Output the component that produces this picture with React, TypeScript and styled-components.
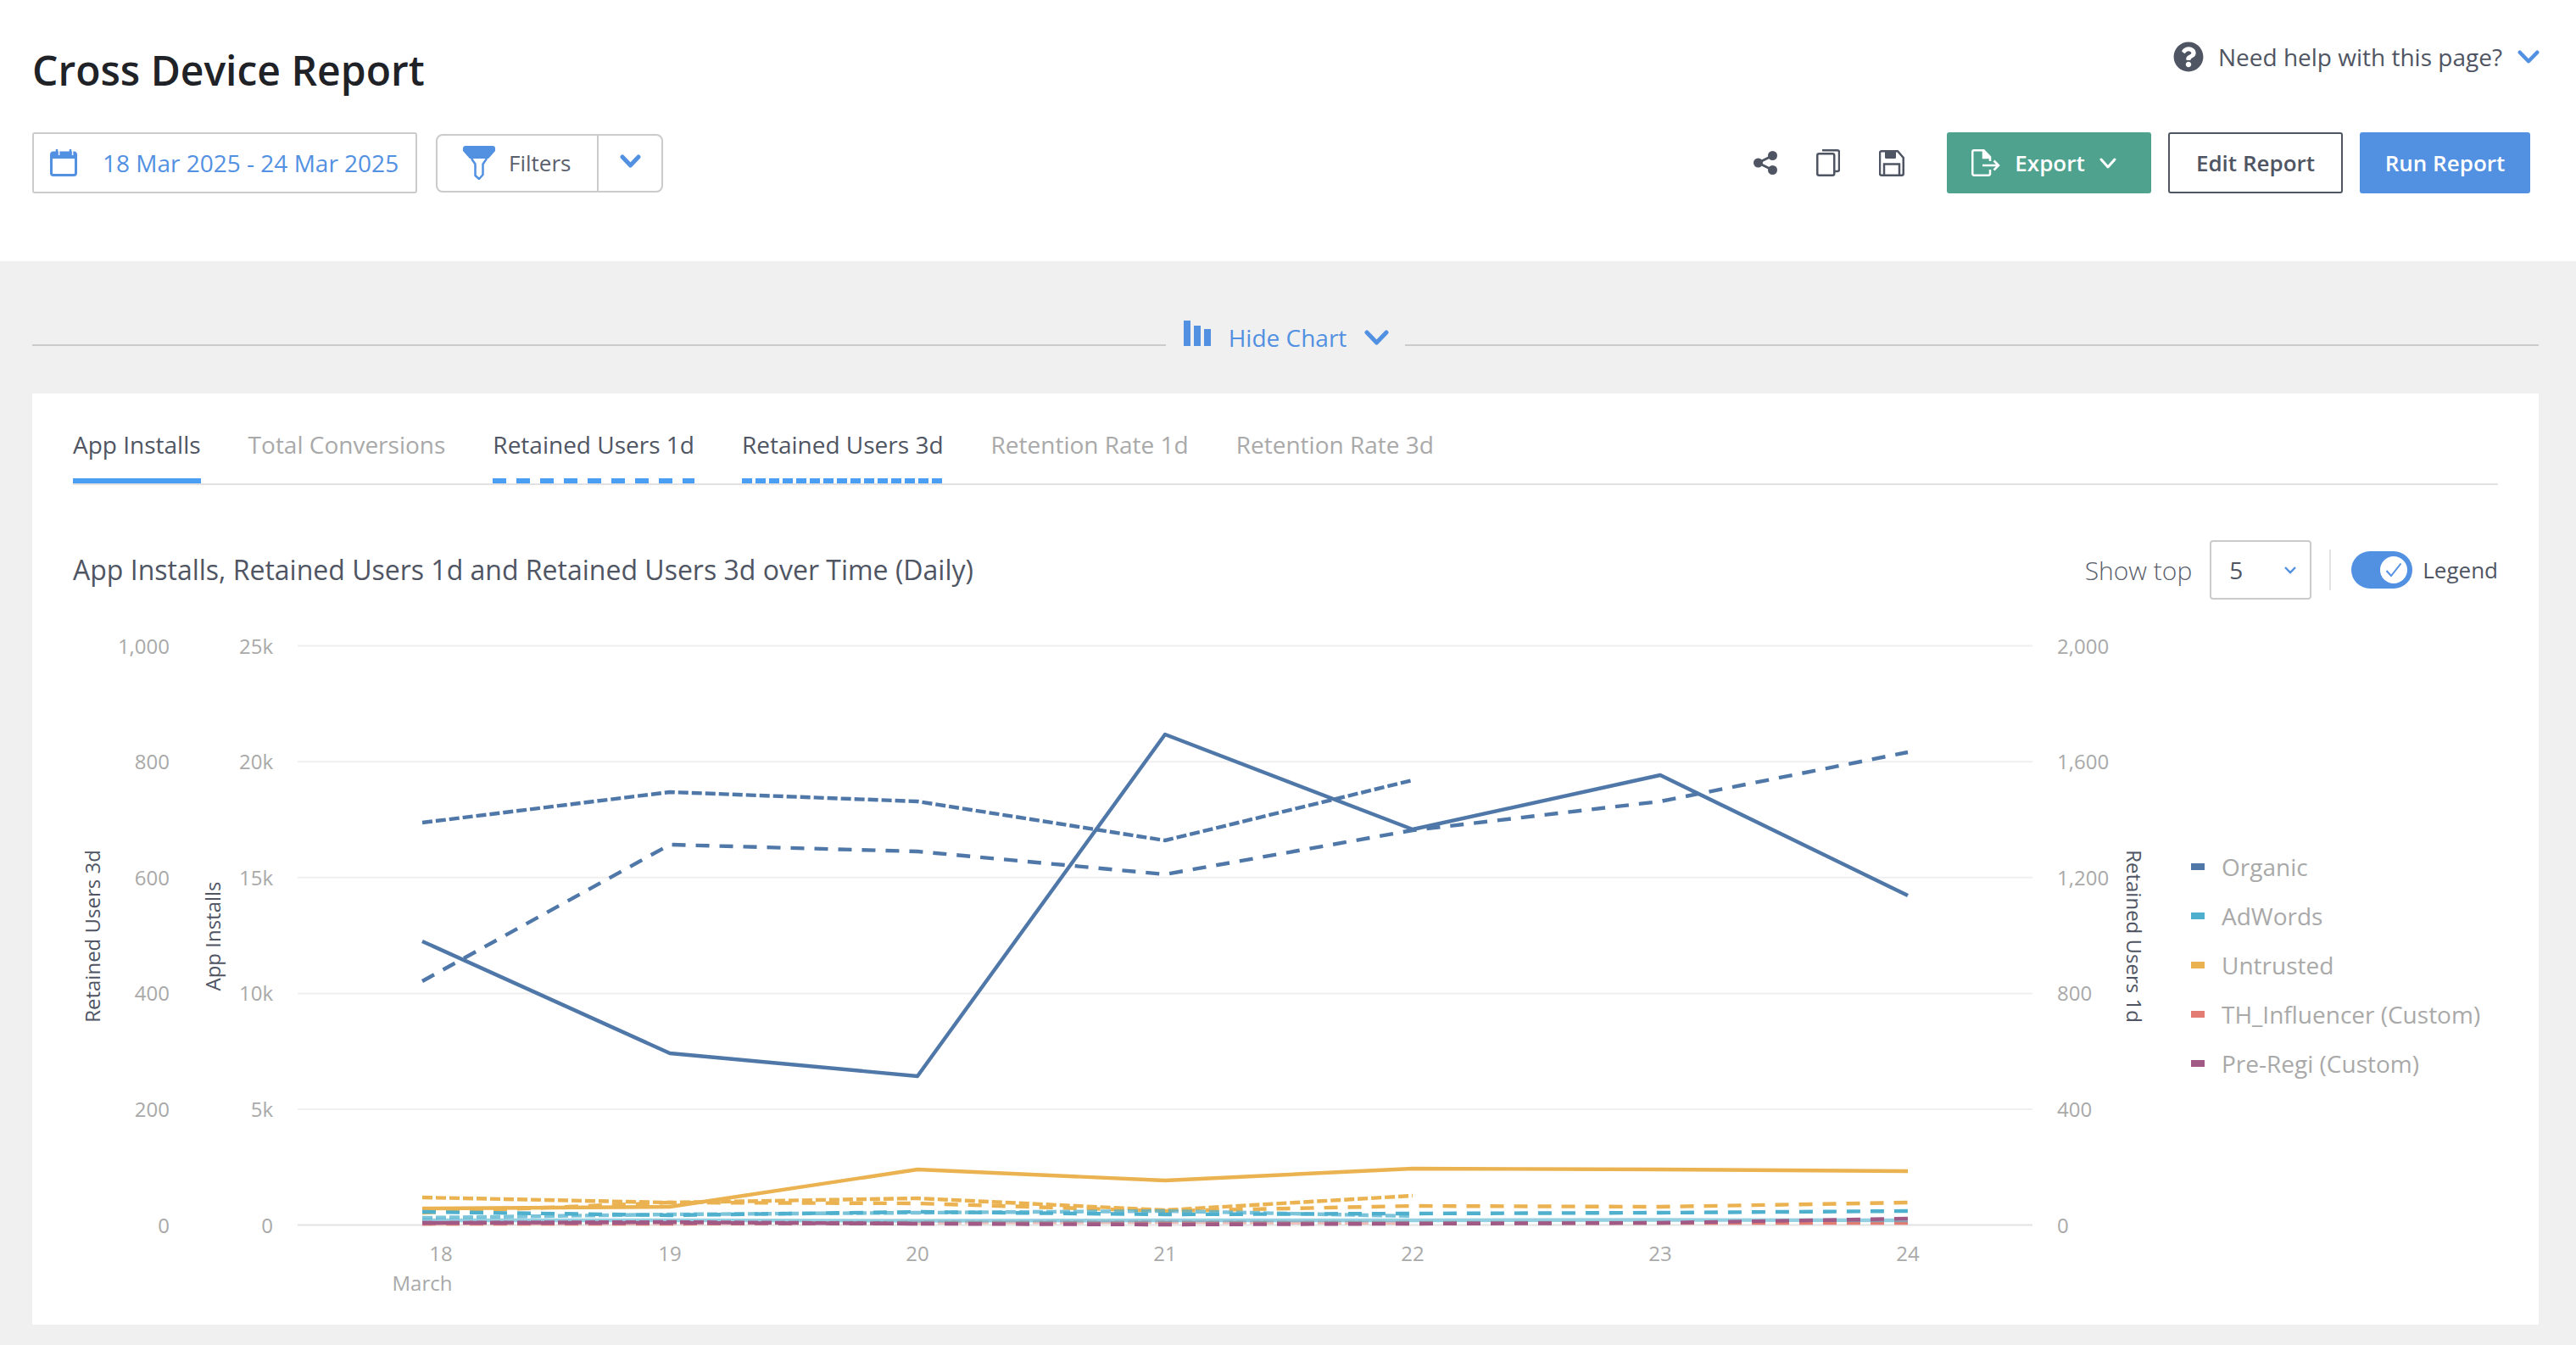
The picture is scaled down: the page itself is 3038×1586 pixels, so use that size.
import React from 'react'
import styled, { createGlobalStyle } from 'styled-components'
import { FaQuestionCircle } from 'react-icons/fa'

const GlobalStyle = createGlobalStyle`
  html, body {
    margin: 0;
    padding: 0;
    background: #f0f0f0;
    font-family: "Open Sans", "Liberation Sans", sans-serif;
    color: #4f5563;
  }
`

const Page = styled.div`
  width: 3038px;
  height: 1586px;
  overflow: hidden;
  background: #f0f0f0;
`

const Header = styled.header`
  height: 308px;
  box-sizing: border-box;
  background: #fff;
  padding: 0 54px 0 38px;
  display: flex;
  flex-direction: column;
`

const HeaderTop = styled.div`
  height: 156px;
  display: flex;
  justify-content: space-between;
  align-items: flex-start;
`

const Title = styled.h1`
  margin: 54px 0 0;
  font-size: 48px;
  line-height: 58px;
  font-weight: 600;
  color: #1f2327;
`

const Help = styled.div`
  margin-top: 48px;
  display: flex;
  align-items: center;
  font-size: 28px;
  line-height: 38px;
  color: #4f5563;
  margin-right: -28px;

  svg:first-child {
    margin-right: 17px;
  }
`

const HelpChevron = styled.span`
  display: flex;
  margin-left: 18px;
`

const Toolbar = styled.div`
  display: flex;
  align-items: center;
  height: 72px;
`

const DateBox = styled.div`
  width: 454px;
  height: 72px;
  box-sizing: border-box;
  border: 2px solid #cbcbcb;
  border-radius: 3px;
  display: flex;
  align-items: center;
  padding-left: 19px;
  gap: 30px;
  font-size: 28px;
  color: #5290e2;
`

const FilterGroup = styled.div`
  margin-left: 22px;
  width: 268px;
  height: 69px;
  box-sizing: border-box;
  border: 2px solid #cbcbcb;
  border-radius: 8px;
  display: flex;
  align-items: stretch;
`

const FilterLabel = styled.div`
  width: 190px;
  box-sizing: border-box;
  display: flex;
  align-items: center;
  padding-left: 30px;
  gap: 16px;
  font-size: 26px;
  color: #5a606c;
  border-right: 2px solid #cbcbcb;
`

const FilterCaret = styled.div`
  flex: 1;
  display: flex;
  align-items: center;
  justify-content: center;
  padding-bottom: 5px;
`

const ToolbarRight = styled.div`
  margin-left: auto;
  display: flex;
  align-items: center;
`

const IconRow = styled.div`
  display: flex;
  align-items: center;
  gap: 46px;
  margin-right: 50px;
  color: #4f5563;
`

const Button = styled.button<{ $variant: 'green' | 'outline' | 'blue'; $width: number }>`
  width: ${(p) => p.$width}px;
  height: 72px;
  box-sizing: border-box;
  margin-left: ${(p) => (p.$variant === 'green' ? 0 : 20)}px;
  border-radius: 3px;
  border: ${(p) => (p.$variant === 'outline' ? '2px solid #4f5563' : 'none')};
  background: ${(p) =>
    p.$variant === 'green' ? '#4fa28e' : p.$variant === 'blue' ? '#5290e2' : '#fff'};
  color: ${(p) => (p.$variant === 'outline' ? '#4f5563' : '#fff')};
  font-family: inherit;
  font-size: 26px;
  font-weight: 600;
  padding: 0 ${(p) => (p.$variant === 'green' ? 12 : 0)}px 0 0;
  display: flex;
  align-items: center;
  justify-content: center;
  gap: 17px;
`

const ChartToggle = styled.div`
  height: 156px;
  box-sizing: border-box;
  display: flex;
  align-items: flex-start;
  padding: 0 44px 0 38px;
`

const ToggleRule = styled.div`
  flex: 1;
  height: 2px;
  background: #cbcbcb;
  margin-top: 98px;
`

const ToggleLabel = styled.div`
  display: flex;
  align-items: center;
  height: 40px;
  margin-top: 70px;
  padding: 0 19px 0 21px;
  font-size: 28px;
  color: #5290e2;
  gap: 21px;
`

const BarsWrap = styled.span`
  display: flex;
  margin-top: -10px;
`

const Card = styled.section`
  margin: 0 44px 0 38px;
  height: 1098px;
  background: #fff;
`

const Tabs = styled.div`
  margin: 0 48px;
  height: 108px;
  box-sizing: border-box;
  border-bottom: 2px solid #e2e2e2;
  display: flex;
  gap: 56px;
`

const lineStyles = {
  solid: 'linear-gradient(#4a9ff5, #4a9ff5)',
  long: 'repeating-linear-gradient(90deg, #4a9ff5 0 16px, transparent 16px 28px)',
  short: 'repeating-linear-gradient(90deg, #4a9ff5 0 12px, transparent 12px 16px)',
}

const Tab = styled.div<{ $active: boolean; $line?: keyof typeof lineStyles }>`
  height: 106px;
  box-sizing: border-box;
  padding-top: 40px;
  font-size: 28px;
  line-height: 40px;
  white-space: nowrap;
  color: ${(p) => (p.$active ? '#4f5563' : '#a9a9a9')};
  background-image: ${(p) => (p.$line ? lineStyles[p.$line] : 'none')};
  background-repeat: no-repeat;
  background-size: 100% 6px;
  background-position: left bottom;
`

const ChartHeader = styled.div`
  margin: 65px 48px 0 48px;
  height: 70px;
  display: flex;
  align-items: center;
`

const ChartTitle = styled.h2`
  margin: 0;
  flex: 1;
  font-size: 32px;
  line-height: 40px;
  font-weight: 400;
  color: #4f5563;
`

const ShowTop = styled.span`
  font-size: 30px;
  font-weight: 300;
  color: #5a606c;
  margin-right: 21px;
`

const Select = styled.div`
  width: 120px;
  height: 70px;
  box-sizing: border-box;
  border: 2px solid #cbcbcb;
  border-radius: 4px;
  display: flex;
  align-items: center;
  justify-content: space-between;
  padding: 0 16px 0 21px;
  font-size: 28px;
  color: #4f5563;
`

const Separator = styled.div`
  width: 2px;
  height: 48px;
  background: #e2e2e2;
  margin: 0 24px 0 21px;
`

const Switch = styled.div`
  position: relative;
  width: 72px;
  height: 44px;
  border-radius: 22px;
  background: #5290e2;
`

const SwitchKnob = styled.div`
  position: absolute;
  top: 6px;
  right: 6px;
  width: 32px;
  height: 32px;
  border-radius: 50%;
  background: #fff;
  display: flex;
  align-items: center;
  justify-content: center;
`

const LegendLabel = styled.span`
  margin-left: 12px;
  font-size: 26px;
  color: #4f5563;
`

const ChartRow = styled.div`
  margin: 23px 0 0 48px;
  display: flex;
  align-items: flex-start;
`

const ChartSvg = styled.svg`
  display: block;
  flex: none;
  font-family: "Open Sans", "Liberation Sans", sans-serif;
`

const Legend = styled.ul`
  list-style: none;
  margin: 263px 0 0 18px;
  padding: 0;
`

const LegendItem = styled.li`
  height: 58px;
  display: flex;
  align-items: center;
  gap: 20px;
  font-size: 28px;
  color: #a9a9a9;
  white-space: nowrap;
`

const Swatch = styled.span<{ $color: string }>`
  width: 16px;
  height: 8px;
  background: ${(p) => p.$color};
`

const Chevron = ({ w, h, sw, color = '#5290e2' }: { w: number; h: number; sw: number; color?: string }) => (
  <svg width={w} height={h} viewBox={`0 0 ${w} ${h}`} fill="none">
    <path
      d={`M${sw / 2 + 0.5} ${sw / 2 + 0.5}L${w / 2} ${h - sw / 2 - 0.5}L${w - sw / 2 - 0.5} ${sw / 2 + 0.5}`}
      stroke={color}
      strokeWidth={sw}
      strokeLinecap="round"
      strokeLinejoin="round"
    />
  </svg>
)

const CalendarIcon = () => (
  <svg width="32" height="32" viewBox="0 0 32 32" fill="none">
    <rect x="1.5" y="4" width="29" height="26.5" rx="2.5" stroke="#5290e2" strokeWidth="3" />
    <path d="M1.5 5h29v6h-29z" fill="#5290e2" />
    <path d="M8 0v8M24 0v8" stroke="#5290e2" strokeWidth="2.5" />
    <path d="M10.6 2v5M26.6 2v5" stroke="#fff" strokeWidth="1.5" />
  </svg>
)

const FunnelIcon = () => (
  <svg width="38" height="40" viewBox="0 0 38 40" fill="none">
    <path d="M3 0h32a3 3 0 0 1 3 3v3L30 15H8L0 6V3a3 3 0 0 1 3-3z" fill="#5290e2" />
    <path
      d="M10 15l4.5 6.5V35l4.5 4 4.5-5V21.500L28 15"
      stroke="#5290e2"
      strokeWidth="2.500"
      strokeLinejoin="round"
    />
  </svg>
)

const ShareIcon = () => (
  <svg width="28" height="28" viewBox="0 0 28 28" fill="#4f5563">
    <circle cx="5.500" cy="14" r="5.500" />
    <circle cx="22.500" cy="5.500" r="5.500" />
    <circle cx="22.500" cy="22.500" r="5.500" />
    <path d="M5.500 14L22.500 5.500M5.500 14l17 8.500" stroke="#4f5563" strokeWidth="3" />
  </svg>
)

const CopyIcon = () => (
  <svg width="28" height="32" viewBox="0 0 28 32" fill="none" stroke="#4f5563" strokeWidth="2.500">
    <rect x="1.250" y="5.250" width="20" height="25.500" rx="2" />
    <path d="M7 1.250h18a2 2 0 0 1 2 2V24a2 2 0 0 1-2 2h-3" />
  </svg>
)

const SaveIcon = () => (
  <svg width="30" height="31" viewBox="0 0 30 31" fill="none">
    <path
      d="M3 1.250h19L28.750 9v18.750a2 2 0 0 1-2 2H3a2 2 0 0 1-2-2v-24.500a2 2 0 0 1 2-2z"
      stroke="#4f5563"
      strokeWidth="2.500"
    />
    <path d="M7 1h13v7.500a1.500 1.500 0 0 1-1.500 1.500h-10A1.500 1.500 0 0 1 7 8.500z" fill="#4f5563" />
    <path d="M6 30V16.500h18V30" stroke="#4f5563" strokeWidth="2.500" />
  </svg>
)

const ExportIcon = () => (
  <svg width="34" height="32" viewBox="0 0 34 32" fill="none" stroke="#fff" strokeWidth="2.500">
    <path d="M22 24v5a1.750 1.750 0 0 1-1.750 1.750H3A1.750 1.750 0 0 1 1.250 29V3A1.750 1.750 0 0 1 3 1.250h11.500L22 9v5" />
    <path d="M14 1.500V10h8" fill="#fff" />
    <path d="M13 19h19M26.500 13.500L32 19l-5.500 5.500" />
  </svg>
)

const BarsIcon = () => (
  <svg width="32" height="30" viewBox="0 0 32 30" fill="#5290e2">
    <rect x="0" y="0" width="8" height="30" />
    <rect x="12" y="6" width="8" height="24" />
    <rect x="24" y="10" width="8" height="20" />
  </svg>
)

const X = [498, 790, 1082, 1374, 1666, 1958, 2250]
const BASE = 1444.6
const COLORS = {
  organic: '#4f78a8',
  adwords: '#4fb0ce',
  untrusted: '#eab250',
  influencer: '#e37c73',
  prereg: '#a05a85',
}

type Series = { color: string; ys: number[]; dash?: 'long' | 'short'; opacity?: number }

const series: Series[] = [
  { color: COLORS.influencer, ys: [1443, 1443, 1442, 1442, 1442, 1442, 1442], dash: 'long' },
  { color: COLORS.influencer, ys: [1443, 1442.500, 1441.500, 1441, 1442], dash: 'short', opacity: 0.5 },
  { color: COLORS.adwords, ys: [1439, 1439, 1439.500, 1439, 1439, 1438.500, 1439], opacity: 0.6 },
  { color: COLORS.untrusted, ys: [1425, 1423, 1379, 1392, 1378, 1379, 1381] },
  { color: COLORS.untrusted, ys: [1430, 1418, 1419, 1428, 1422, 1423, 1418], dash: 'long' },
  { color: COLORS.untrusted, ys: [1412, 1418, 1413, 1427, 1410], dash: 'short' },
  { color: COLORS.adwords, ys: [1429, 1433, 1429, 1432, 1431, 1430, 1428], dash: 'long' },
  { color: COLORS.adwords, ys: [1436, 1432, 1430, 1428, 1434], dash: 'short', opacity: 0.75 },
  { color: COLORS.prereg, ys: [1442, 1441, 1443], dash: 'short' },
  { color: COLORS.prereg, ys: [1442, 1442, 1443, 1444, 1443, 1442, 1437], dash: 'long' },
  { color: COLORS.organic, ys: [1110, 1242, 1269, 866, 978, 914, 1056] },
  { color: COLORS.organic, ys: [1157, 996, 1004, 1031, 979, 945, 887], dash: 'long' },
  { color: COLORS.organic, ys: [970, 934, 945, 991, 920], dash: 'short' },
]

const dashes = { long: '16 12', short: '12 4' }

const ticks = [
  { l: '0', m: '0', r: '0' },
  { l: '200', m: '5k', r: '400' },
  { l: '400', m: '10k', r: '800' },
  { l: '600', m: '15k', r: '1,200' },
  { l: '800', m: '20k', r: '1,600' },
  { l: '1,000', m: '25k', r: '2,000' },
]

const legend = [
  { name: 'Organic', color: COLORS.organic },
  { name: 'AdWords', color: COLORS.adwords },
  { name: 'Untrusted', color: COLORS.untrusted },
  { name: 'TH_Influencer (Custom)', color: COLORS.influencer },
  { name: 'Pre-Regi (Custom)', color: COLORS.prereg },
]

const tabs: { name: string; active: boolean; line?: keyof typeof lineStyles }[] = [
  { name: 'App Installs', active: true, line: 'solid' },
  { name: 'Total Conversions', active: false },
  { name: 'Retained Users 1d', active: true, line: 'long' },
  { name: 'Retained Users 3d', active: true, line: 'short' },
  { name: 'Retention Rate 1d', active: false },
  { name: 'Retention Rate 3d', active: false },
]

const Chart = () => (
  <ChartSvg width="2480" height="820" viewBox="86 730 2480 820">
    {ticks.map((t, i) => {
      const y = BASE - i * 136.6
      return (
        <g key={t.m}>
          <line x1="351" x2="2397" y1={y} y2={y} stroke={i === 0 ? '#e2e2e2' : '#efefef'} strokeWidth="2" />
          <text x="200" y={y + 9} textAnchor="end" fontSize="24" fill="#a9a9a9">{t.l}</text>
          <text x="322" y={y + 9} textAnchor="end" fontSize="24" fill="#a9a9a9">{t.m}</text>
          <text x="2426" y={y + 9} fontSize="24" fill="#a9a9a9">{t.r}</text>
        </g>
      )
    })}
    <text transform="translate(118 1104) rotate(-90)" textAnchor="middle" fontSize="24" fill="#4f5563">Retained Users 3d</text>
    <text transform="translate(260 1104) rotate(-90)" textAnchor="middle" fontSize="24" fill="#4f5563">App Installs</text>
    <text transform="translate(2508 1104) rotate(90)" textAnchor="middle" fontSize="24" fill="#4f5563">Retained Users 1d</text>
    {series.map((s, i) => (
      <polyline
        key={i}
        points={s.ys.map((y, j) => `${X[j]},${y}`).join(' ')}
        fill="none"
        stroke={s.color}
        strokeWidth="4.400"
        strokeLinejoin="round"
        strokeDasharray={s.dash ? dashes[s.dash] : undefined}
        opacity={s.opacity}
      />
    ))}
    {['18', '19', '20', '21', '22', '23', '24'].map((d, i) => (
      <text key={d} x={i === 0 ? 520 : X[i]} y="1487" textAnchor="middle" fontSize="24" fill="#a9a9a9">{d}</text>
    ))}
    <text x="498" y="1522" textAnchor="middle" fontSize="24" fill="#a9a9a9">March</text>
  </ChartSvg>
)

export default function App() {
  return (
    <Page>
      <GlobalStyle />
      <Header>
        <HeaderTop>
          <Title>Cross Device Report</Title>
          <Help>
            <FaQuestionCircle size={36} color="#4f5563" />
            Need help with this page?
            <HelpChevron>
              <Chevron w={26} h={16} sw={4.500} />
            </HelpChevron>
          </Help>
        </HeaderTop>
        <Toolbar>
          <DateBox>
            <CalendarIcon />
            18 Mar 2025 - 24 Mar 2025
          </DateBox>
          <FilterGroup>
            <FilterLabel>
              <FunnelIcon />
              Filters
            </FilterLabel>
            <FilterCaret>
              <Chevron w={25} h={16} sw={5} />
            </FilterCaret>
          </FilterGroup>
          <ToolbarRight>
            <IconRow>
              <ShareIcon />
              <CopyIcon />
              <SaveIcon />
            </IconRow>
            <Button $variant="green" $width={241}>
              <ExportIcon />
              Export
              <Chevron w={20} h={13} sw={3} color="#fff" />
            </Button>
            <Button $variant="outline" $width={206}>Edit Report</Button>
            <Button $variant="blue" $width={201}>Run Report</Button>
          </ToolbarRight>
        </Toolbar>
      </Header>
      <ChartToggle>
        <ToggleRule />
        <ToggleLabel>
          <BarsWrap>
            <BarsIcon />
          </BarsWrap>
          Hide Chart
          <Chevron w={29} h={18} sw={5} />
        </ToggleLabel>
        <ToggleRule />
      </ChartToggle>
      <Card>
        <Tabs>
          {tabs.map((t) => (
            <Tab key={t.name} $active={t.active} $line={t.line}>{t.name}</Tab>
          ))}
        </Tabs>
        <ChartHeader>
          <ChartTitle>App Installs, Retained Users 1d and Retained Users 3d over Time (Daily)</ChartTitle>
          <ShowTop>Show top</ShowTop>
          <Select>
            5
            <Chevron w={14} h={9} sw={2.500} />
          </Select>
          <Separator />
          <Switch>
            <SwitchKnob>
              <svg width="20" height="18" viewBox="0 0 20 18" fill="none">
                <path d="M1.500 10l5.500 6L18.500 1.500" stroke="#5290e2" strokeWidth="2" />
              </svg>
            </SwitchKnob>
          </Switch>
          <LegendLabel>Legend</LegendLabel>
        </ChartHeader>
        <ChartRow>
          <Chart />
          <Legend>
            {legend.map((l) => (
              <LegendItem key={l.name}>
                <Swatch $color={l.color} />
                {l.name}
              </LegendItem>
            ))}
          </Legend>
        </ChartRow>
      </Card>
    </Page>
  )
}
